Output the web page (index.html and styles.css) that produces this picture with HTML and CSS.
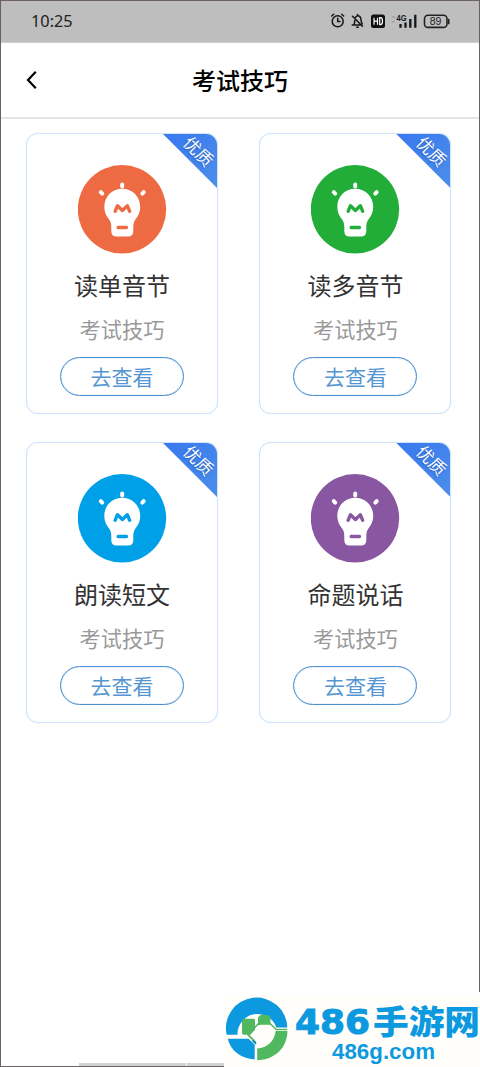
FILE: index.html
```html
<!DOCTYPE html>
<html lang="zh-CN">
<head>
<meta charset="utf-8">
<title>考试技巧</title>
<link rel="stylesheet" href="styles.css">
</head>
<body>
<svg class="defs" aria-hidden="true">
  <symbol id="bulb" viewBox="0 0 89 89">
    <circle cx="44" cy="44.300" r="44.200" fill="currentColor"/>
    <path d="M44.200 23.800c10.400 0 18 8.200 18 18 0 5.500-1.800 9-4.600 12.500-1.800 2.500-2.300 4.500-2.300 8.500v3.500c0 3.400-1.900 5.300-5.300 5.300h-11.400c-3.400 0-5.300-1.900-5.300-5.300v-3.500c0-4-.5-6-2.400-8.500-2.800-3.500-4.600-7-4.600-12.500 0-9.800 7.500-18 17.900-18z" fill="#fff"/>
    <path d="M44.200 19.600v1.900M22.800 27.200l1.400 1.400M65.700 27.200l-1.400 1.400" fill="none" stroke="#fff" stroke-width="4" stroke-linecap="round"/>
    <path d="M37.100 46.300l2.400-5.600 4.900 4.700 4.900-4.700 2.400 5.600M40.200 62.500h8.300" fill="none" stroke="currentColor" stroke-width="3.400" stroke-linecap="round" stroke-linejoin="round"/>
  </symbol>
</svg>
<div class="screen">
  <div class="status">
    <span class="clock">10:25</span>
    <svg class="status-icons" viewBox="0 0 120 18" width="120" height="18">
      <g fill="none" stroke="#161616" stroke-width="1.500" stroke-linecap="round">
        <circle cx="7.700" cy="9.300" r="5.500"/>
        <path d="M7.700 6.300v3.300h2.300M1.700 4l2-1.800M13.700 4l-2-1.800"/>
        <path d="M22.200 13h9.500M24 12.500c.8-1 .7-2 .7-4M25.500 5.200c2.500-3 5.500-1 5.500 2.500 0 2 .5 3 1.300 4M22.500 4.200l10 10M27.500 2.500v.8M26.700 15.200h1.600"/>
      </g>
      <rect x="41" y="2.600" width="14" height="13.300" rx="2.500" fill="#101010"/>
      <path d="M44 5.700v7M47.500 5.700v7M44 9.200h3.500M49.700 5.700v7h.8c1.500 0 2-1 2-3.500s-.5-3.500-2-3.500z" fill="none" stroke="#fff" stroke-width="1.200"/>
      <path d="M61.700 6l1.600-2 1.600 2M61.700 8.700l1.600 2 1.600-2" fill="none" stroke="#999" stroke-width="1"/>
      <text x="66.500" y="9.200" class="net" textLength="10" lengthAdjust="spacingAndGlyphs">4G</text>
      <path d="M70.500 12v3.700M75.500 10.500v5.200M80.300 7v8.700M85.300 2.800v12.900" fill="none" stroke="#161616" stroke-width="2.300"/>
      <rect x="94.500" y="3.200" width="22.500" height="12.200" rx="3.500" fill="none" stroke="#222" stroke-width="1.600"/>
      <path d="M118.700 7.500v4" stroke="#222" stroke-width="1.700" stroke-linecap="round"/>
      <text x="105.500" y="13" class="charge" text-anchor="middle">89</text>
    </svg>
  </div>
  <header class="navbar">
    <svg class="back" viewBox="0 0 12 20" width="12" height="20"><path d="M10.800 1.800L3 10l7.800 8.200" fill="none" stroke="#000" stroke-width="2.200"/></svg>
    <h1>考试技巧</h1>
  </header>
  <main class="grid">
    <section class="card orange">
      <div class="ribbon"><span>优质</span></div>
      <svg class="icon"><use href="#bulb"/></svg>
      <h2>读单音节</h2><p>考试技巧</p><button>去查看</button>
    </section>
    <section class="card green">
      <div class="ribbon"><span>优质</span></div>
      <svg class="icon"><use href="#bulb"/></svg>
      <h2>读多音节</h2><p>考试技巧</p><button>去查看</button>
    </section>
    <section class="card blue">
      <div class="ribbon"><span>优质</span></div>
      <svg class="icon"><use href="#bulb"/></svg>
      <h2>朗读短文</h2><p>考试技巧</p><button>去查看</button>
    </section>
    <section class="card purple">
      <div class="ribbon"><span>优质</span></div>
      <svg class="icon"><use href="#bulb"/></svg>
      <h2>命题说话</h2><p>考试技巧</p><button>去查看</button>
    </section>
  </main>
  <div class="bottom-strip"><i></i><i></i></div>
</div>
<div class="site-mark">
  <svg viewBox="0 0 256 75" width="256" height="75">
    <rect y="3" width="256" height="72" fill="#fffefb"/>
    <path d="M2.600 42.700A30.700 30.700 0 1 1 63.300 35.500H52.400A20 20 0 0 0 13.500 42.700z" fill="#0d99df"/>
    <path d="M3.700 46.800h21l6 6v14.700C17 66.500 6.700 59 3.700 46.800z" fill="#0d99df"/>
    <path d="M63.400 39c0 17-13 29-30.200 29.200V56.500c10-.7 17.600-7.500 18.400-17.500z" fill="#50b85e"/>
    <path d="M19.500 26.700H30l1 1V37.700l-4.700 5H19.500L18 41.200V28.200z" fill="#50b85e"/>
    <path d="M36.500 22.900h7.700l2.300 2.300v7.600H37l-3 .4v-7.800z" fill="#50b85e"/>
    <path d="M34.500 31.500l-9.800 10.700" fill="none" stroke="#50b85e" stroke-width="1.500"/>
    <path d="M45 30.500l7.200 7h11" fill="none" stroke="#50b85e" stroke-width="1.500"/>
    <path d="M23.500 42.200l8.300 8.500" fill="none" stroke="#50b85e" stroke-width="1.800"/>
    <path d="M28.500 48.500l3.500 3.400" stroke="#0d80c8" stroke-width="1.600"/>
    <text class="mark-digits" x="71" y="42" textLength="75" lengthAdjust="spacingAndGlyphs">486</text>
    <text class="mark-name" x="149" y="42" textLength="107" lengthAdjust="spacingAndGlyphs">手游网</text>
    <text class="mark-url" x="108" y="67" textLength="103" lengthAdjust="spacingAndGlyphs">486g.com</text>
  </svg>
</div>
</body>
</html>
```
FILE: styles.css
```css
* { box-sizing: border-box; }
body {
  margin: 0;
  background: #fff;
  font-family: "Noto Sans CJK SC", sans-serif;
}
.defs { display: none; }
.screen {
  display: flex;
  flex-direction: column;
  width: 480px;
  height: 1067px;
  border: 1px solid #6b6065;
  background: #fff;
}
.status {
  display: flex;
  align-items: center;
  justify-content: space-between;
  height: 42px;
  padding: 0 29px 1px 30px;
  background: #bebebe;
  border-bottom: 1px solid #d0d0d0;
}
.clock {
  font: 16.300px/20px "Noto Sans", sans-serif;
  color: #222;
}
.net { font: bold 9px "Liberation Sans", sans-serif; fill: #161616; }
.charge { font: 10.500px "Liberation Sans", sans-serif; fill: #222; }
.navbar {
  display: grid;
  grid-template-columns: 60px 1fr 60px;
  align-items: center;
  height: 76px;
  border-bottom: 2px solid #e5e5e5;
}
.back { margin-left: 24px; }
.navbar h1 {
  margin: 0;
  font-size: 24px;
  line-height: 34px;
  font-weight: 500;
  text-align: center;
  color: #000;
}
.grid {
  display: grid;
  grid-template-columns: 192px 192px;
  grid-auto-rows: 281px;
  gap: 28px 41.400px;
  padding: 14px 0 0 25px;
}
.card {
  position: relative;
  display: flex;
  flex-direction: column;
  align-items: center;
  padding-top: 31px;
  border: 1px solid #cfe4fa;
  border-radius: 12px;
  background: #fff;
  box-shadow: 0 0 1px #cfe4fa;
}
.ribbon {
  position: absolute;
  top: 0;
  right: 0;
  width: 54px;
  height: 54px;
}
.ribbon::before {
  content: "";
  display: block;
  height: 100%;
  border-top-right-radius: 11px;
  background: linear-gradient(135deg, #3978f0, #4c8eea);
  clip-path: polygon(0 0, 100% 0, 100% 100%);
}
.ribbon span {
  position: absolute;
  top: 5px;
  left: 16px;
  width: 40px;
  font-size: 17px;
  line-height: 24px;
  text-align: center;
  color: #fff;
  text-shadow: 0 1px 2px #245cae;
  transform: rotate(45deg);
}
.icon { width: 89px; height: 89px; }
.orange { color: #ee6a42; }
.green { color: #22ac38; }
.blue { color: #00a0e9; }
.purple { color: #8957a1; }
.card h2 {
  margin: 14px 0 0;
  font-size: 24px;
  line-height: 34px;
  font-weight: 400;
  color: #333;
}
.card p {
  margin: 12px 0 0;
  font-size: 21.200px;
  line-height: 30px;
  font-weight: 400;
  color: #999;
}
.card button {
  width: 124px;
  height: 39px;
  margin: 13px 0 0;
  padding: 0 0 1px;
  border: 1px solid #4b90d0;
  border-radius: 20px;
  background: #fff;
  box-shadow: inset 0 0 1px #4b90d0;
  font: 21px/30px "Noto Sans CJK SC", sans-serif;
  color: #5596d2;
}
.bottom-strip {
  display: flex;
  gap: 1px;
  height: 3px;
  margin: auto 0 0 78px;
}
.bottom-strip i { width: 107px; background: #d2d2d2; }
.site-mark {
  position: absolute;
  top: 992px;
  left: 224px;
  width: 256px;
  height: 75px;
  background: #fff;
}
.site-mark svg { display: block; }
.mark-digits { font: bold 33px "DejaVu Sans", sans-serif; fill: #0d99df; stroke: #0d99df; stroke-width: 1; }
.mark-name { font: 900 33px "Noto Sans CJK SC", sans-serif; fill: #0d99df; }
.mark-url { font: bold 21.500px "Liberation Sans", sans-serif; fill: #0d99df; }
```
